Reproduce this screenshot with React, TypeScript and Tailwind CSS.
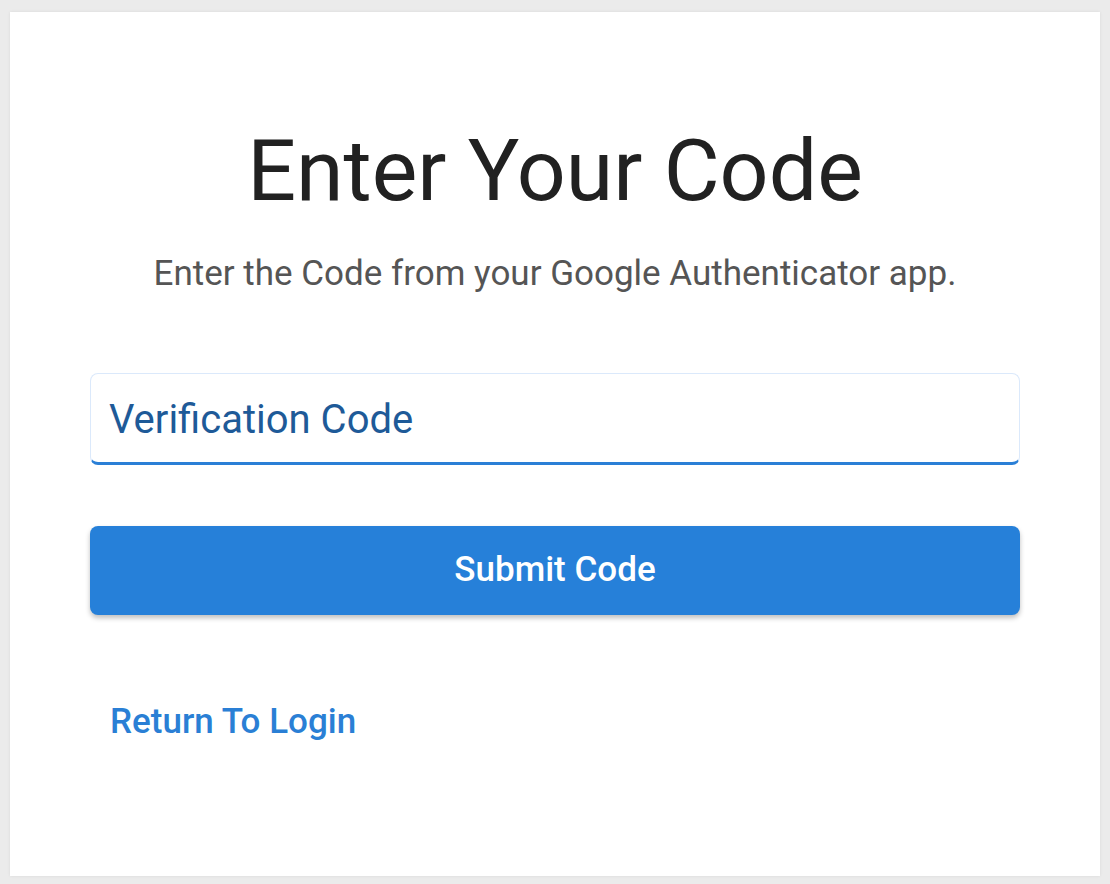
export default function App() {
  return (
    <div className="w-[1110px] h-[884px] bg-[#ebebeb] pt-[12px] pl-[10px] pr-[10px] pb-[8px]" style={{ fontFamily: "Roboto, 'Noto Sans', sans-serif" }}>
      <div className="w-[1090px] h-[864px] bg-white shadow-[0_0_3px_rgba(0,0,0,0.08)] flex flex-col px-[80px]">
        <h1 className="mt-[109px] text-center text-[86px] leading-[100px] text-[#212121] font-normal">Enter Your Code</h1>
        <p className="mt-[33px] text-center text-[35px] leading-[40px] text-[#555555]">Enter the Code from your Google Authenticator app.</p>

        <div className="mt-[79px] h-[92px] rounded-[8px] border border-[#dbe9fb] border-b-[3px] border-b-[#2a7fd6] flex items-center px-[18px] pt-[3px]">
          <span className="text-[40px] text-[#1e5a98]">Verification Code</span>
        </div>

        <button className="mt-[61px] h-[89px] w-full rounded-[8px] bg-[#2680d9] text-white text-[35px] font-medium shadow-[0_3px_5px_rgba(0,0,0,0.25)]">
          Submit Code
        </button>

        <a className="mt-[87px] ml-[20px] self-start text-[35px] leading-[40px] font-medium text-[#2a7fd5]">Return To Login</a>
      </div>
    </div>
  );
}
